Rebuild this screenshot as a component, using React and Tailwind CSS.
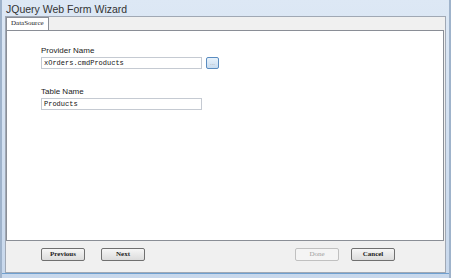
export default function App() {
  return (
    <div className="w-[451px] h-[278px] flex flex-col bg-gradient-to-b from-[#dde8f5] to-[#c8d8ec] border-l-2 border-r-2 border-[#9fb3cb] font-['Liberation_Sans',sans-serif] overflow-hidden">
      {/* title */}
      <div className="h-[16px] pl-[4px] pt-[4px] text-[10.5px] leading-[11px] text-[#333]">
        JQuery Web Form Wizard
      </div>

      <div className="flex-1 flex flex-col mx-[3px] bg-[#f0f0f0] border border-[#a0a8b4]">
        {/* tab strip */}
        <div className="h-[13px] flex items-end">
          <div className="h-[13px] px-[4px] bg-white border border-b-0 border-[#8a8e96] text-[7px] leading-[11px] text-[#222] font-['Liberation_Serif',serif]">
            DataSource
          </div>
        </div>

        {/* content */}
        <div className="h-[211px] bg-white border border-[#8a8e96] mr-[1px] pt-[15px] pl-[34px]">
          <div className="text-[8px] leading-[9px] text-[#222]">Provider Name</div>
          <div className="flex items-center gap-[4px] mt-[2px]">
            <div className="w-[161px] h-[12px] border border-[#c5cad2] bg-white pl-[2px] text-[7px] leading-[10px] text-[#111] font-['Liberation_Mono',monospace]">
              xOrders.cmdProducts
            </div>
            <div className="w-[13px] h-[12px] rounded-[2px] border border-[#5a8cc0] bg-gradient-to-b from-[#e8f2fb] to-[#c9dcef] flex items-center justify-center">
              <div className="text-[6px] leading-[6px] text-[#999]">...</div>
            </div>
          </div>

          <div className="text-[8px] leading-[9px] text-[#222] mt-[18px]">Table Name</div>
          <div className="w-[161px] h-[12px] mt-[2px] border border-[#c5cad2] bg-white pl-[2px] text-[7px] leading-[10px] text-[#111] font-['Liberation_Mono',monospace]">
            Products
          </div>
        </div>

        {/* buttons */}
        <div className="flex-1 flex items-center pl-[35px] pr-[50px] pb-[4px]">
          <button className="w-[44px] h-[13px] border border-[#707070] rounded-[2px] bg-gradient-to-b from-[#f6f6f6] to-[#dcdcdc] text-[7px] leading-[11px] font-bold text-[#222] font-['Liberation_Serif',serif]">
            Previous
          </button>
          <button className="w-[44px] h-[13px] ml-[16px] border border-[#707070] rounded-[2px] bg-gradient-to-b from-[#f6f6f6] to-[#dcdcdc] text-[7px] leading-[11px] font-bold text-[#222] font-['Liberation_Serif',serif]">
            Next
          </button>
          <div className="flex-1" />
          <button className="w-[44px] h-[13px] border border-[#c0c0c0] rounded-[2px] bg-[#f4f4f4] text-[7px] leading-[11px] text-[#a0a0a0] font-['Liberation_Serif',serif]">
            Done
          </button>
          <button className="w-[44px] h-[13px] ml-[12px] border border-[#707070] rounded-[2px] bg-gradient-to-b from-[#f6f6f6] to-[#dcdcdc] text-[7px] leading-[11px] font-bold text-[#222] font-['Liberation_Serif',serif]">
            Cancel
          </button>
        </div>
      </div>
      <div className="h-[5px] border-t border-[#6fa0d0]" />
    </div>
  );
}
